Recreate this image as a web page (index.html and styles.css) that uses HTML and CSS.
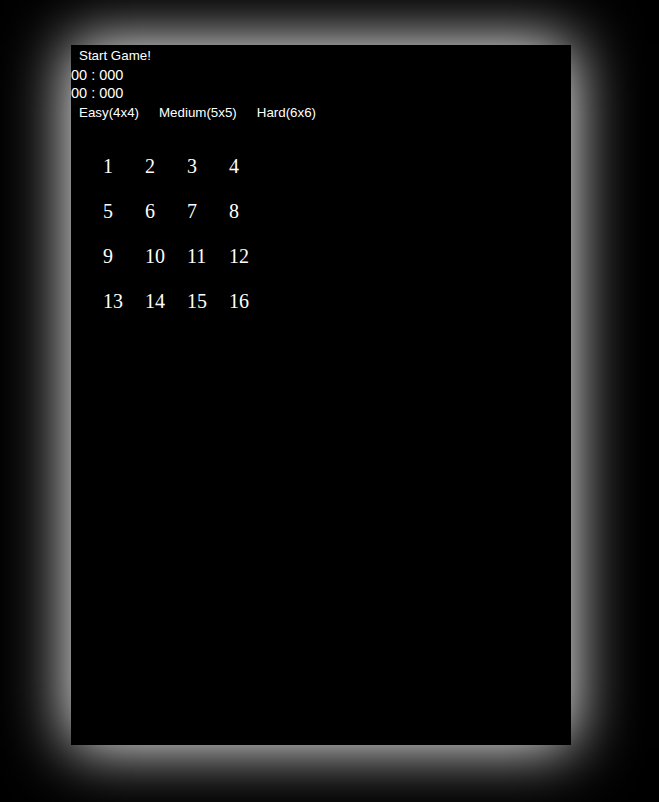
FILE: index.html
```html
<!DOCTYPE html>
<html>
<head>
<meta charset="utf-8">
<link rel="stylesheet" href="styles.css">
</head>
<body>
<div class="game">
  <div class="controls">
    <button class="btn">Start Game!</button>
  </div>
  <div class="timer">00 : 000</div>
  <div class="timer">00 : 000</div>
  <div class="levels">
    <button class="btn">Easy(4x4)</button>
    <button class="btn">Medium(5x5)</button>
    <button class="btn">Hard(6x6)</button>
  </div>
  <div class="board">
    <div class="cell">1</div><div class="cell">2</div><div class="cell">3</div><div class="cell">4</div>
    <div class="cell">5</div><div class="cell">6</div><div class="cell">7</div><div class="cell">8</div>
    <div class="cell">9</div><div class="cell">10</div><div class="cell">11</div><div class="cell">12</div>
    <div class="cell">13</div><div class="cell">14</div><div class="cell">15</div><div class="cell">16</div>
  </div>
</div>
</body>
</html>
```
FILE: styles.css
```css
html, body {
  margin: 0;
  padding: 0;
  background: #000;
}
body {
  padding: 45px 0 0 71px;
  height: 802px;
  box-sizing: border-box;
  overflow: hidden;
}
.game {
  width: 500px;
  height: 700px;
  background: #000;
  color: #fff;
  box-shadow: 0 0 60px 2px #fff;
  font-family: "Liberation Sans", Arial, sans-serif;
}
.controls, .levels {
  height: 21px;
  font-size: 0;
}
.levels {
  display: flex;
  gap: 4px;
}
.btn {
  font-family: "Liberation Sans", Arial, sans-serif;
  font-size: 13.33px;
  line-height: 15px;
  color: #fff;
  background: transparent;
  border: 2px solid transparent;
  padding: 1px 6px;
  margin: 0;
}
.timer {
  font-size: 14.5px;
  line-height: 18px;
  height: 18px;
}
.board {
  display: grid;
  grid-template-columns: repeat(4, 42px);
  grid-auto-rows: 45px;
  margin: 21px 0 0 32px;
  font-family: "Liberation Serif", "Times New Roman", serif;
  font-size: 20px;
}
.cell {
  display: flex;
  align-items: center;
}
```
